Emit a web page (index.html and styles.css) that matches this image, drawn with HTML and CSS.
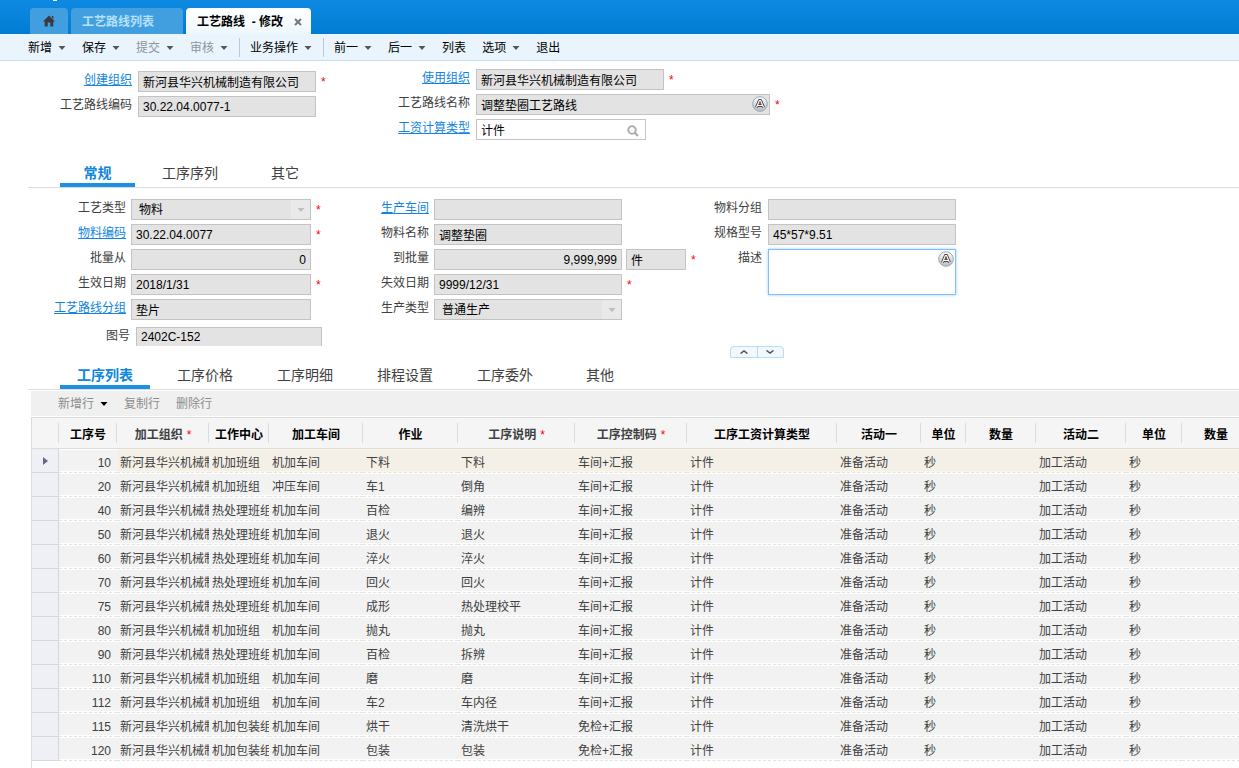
FILE: index.html
```html
<!DOCTYPE html>
<html lang="zh-CN">
<head>
<meta charset="utf-8">
<title>工艺路线 - 修改</title>
<link rel="stylesheet" href="styles.css">
</head>
<body>
<svg class="defs" aria-hidden="true">
  <defs>
    <linearGradient id="badge-fill" x1="0" y1="0" x2="0" y2="1">
      <stop offset="0" stop-color="#ffffff"/>
      <stop offset="1" stop-color="#b4bcc4"/>
    </linearGradient>
    <symbol id="caret" viewBox="0 0 8 4"><path d="M.5 0h7L4 4z" fill="currentColor"/></symbol>
    <symbol id="multilang" viewBox="0 0 16 16">
      <circle cx="8" cy="8" r="7.3" fill="url(#badge-fill)" stroke="#9aa6b2"/>
      <path d="M4.500 11.500L7.400 4.500h1.200L11.500 11.500M6 9.500h4" fill="none" stroke="#4b3f38" stroke-width="3" stroke-linejoin="round"/>
      <path d="M4.500 11.500L7.400 4.500h1.200L11.500 11.500M6 9.500h4" fill="none" stroke="#ffffff" stroke-width="1.200"/>
    </symbol>
  </defs>
</svg>

<nav class="window-tabs">
  <button class="wtab home" aria-label="主页"><svg width="12" height="12" viewBox="0 0 12 12"><path d="M6 0.500L12 6.500H10.300V11.500H7.300V7.500H4.700V11.500H1.700V6.500H0L6 .5zM8.800 1h1.600v3L8.800 2.500z" fill="#3a3a3a"/></svg></button>
  <button class="wtab list">工艺路线列表</button>
  <div class="wtab current"><span>工艺路线 &nbsp;- 修改</span><button class="close" aria-label="关闭"><svg width="8" height="8" viewBox="0 0 8 8"><path d="M1 1l6 6M7 1L1 7" stroke="#777" stroke-width="2"/></svg></button></div>
</nav>

<div class="toolbar">
  <button>新增<svg class="caret"><use href="#caret"/></svg></button>
  <button>保存<svg class="caret"><use href="#caret"/></svg></button>
  <button class="off">提交<svg class="caret"><use href="#caret"/></svg></button>
  <button class="off">审核<svg class="caret"><use href="#caret"/></svg></button>
  <span class="sep"></span>
  <button>业务操作<svg class="caret"><use href="#caret"/></svg></button>
  <span class="sep"></span>
  <button>前一<svg class="caret"><use href="#caret"/></svg></button>
  <button>后一<svg class="caret"><use href="#caret"/></svg></button>
  <button>列表</button>
  <button>选项<svg class="caret"><use href="#caret"/></svg></button>
  <button>退出</button>
</div>

<main>
  <form class="form head-form">
    <div class="column h1">
      <div class="field"><label for="f1"><a href="#">创建组织</a></label><input id="f1" class="w178" value="新河县华兴机械制造有限公司" readonly><i class="req">*</i></div>
      <div class="field"><label for="f2">工艺路线编码</label><input id="f2" class="w178" value="30.22.04.0077-1" readonly></div>
    </div>
    <div class="column h2">
      <div class="field"><label for="f3"><a href="#">使用组织</a></label><input id="f3" class="w188" value="新河县华兴机械制造有限公司" readonly><i class="req">*</i></div>
      <div class="field"><label for="f4">工艺路线名称</label><span class="wrap"><input id="f4" class="w294" value="调整垫圈工艺路线" readonly><svg class="lang"><use href="#multilang"/></svg></span><i class="req">*</i></div>
      <div class="field"><label for="f5"><a href="#">工资计算类型</a></label><span class="wrap"><input id="f5" class="w170 editable" value="计件"><svg class="search" viewBox="0 0 12 12"><circle cx="5" cy="5" r="3.800" fill="none" stroke="#aaa" stroke-width="1.800"/><path d="M7.800 7.800L11 11" stroke="#aaa" stroke-width="2.200"/></svg></span></div>
    </div>
  </form>

  <div class="tabs">
    <button class="tab active">常规</button>
    <button class="tab">工序序列</button>
    <button class="tab">其它</button>
  </div>

  <form class="form general-form">
    <div class="column g1">
      <div class="field"><label for="g1">工艺类型</label><span class="wrap"><select id="g1" class="w180"><option>物料</option></select><span class="drop"><svg class="caret"><use href="#caret"/></svg></span></span><i class="req">*</i></div>
      <div class="field"><label for="g2"><a href="#">物料编码</a></label><input id="g2" class="w180" value="30.22.04.0077" readonly><i class="req">*</i></div>
      <div class="field"><label for="g3">批量从</label><input id="g3" class="w180 num" value="0" readonly></div>
      <div class="field"><label for="g4">生效日期</label><input id="g4" class="w180" value="2018/1/31" readonly><i class="req">*</i></div>
      <div class="field"><label for="g5"><a href="#">工艺路线分组</a></label><input id="g5" class="w180" value="垫片" readonly></div>
      <div class="field drawing"><label for="g6">图号</label><input id="g6" class="w186" value="2402C-152" readonly></div>
    </div>
    <div class="column g2">
      <div class="field"><label for="g7"><a href="#">生产车间</a></label><input id="g7" class="w188" readonly></div>
      <div class="field"><label for="g8">物料名称</label><input id="g8" class="w188" value="调整垫圈" readonly></div>
      <div class="field"><label for="g9">到批量</label><input id="g9" class="w188 num" value="9,999,999" readonly><input class="unit" aria-label="单位" value="件" readonly><i class="req">*</i></div>
      <div class="field"><label for="g10">失效日期</label><input id="g10" class="w188" value="9999/12/31" readonly><i class="req">*</i></div>
      <div class="field"><label for="g11">生产类型</label><span class="wrap"><select id="g11" class="w188"><option>普通生产</option></select><span class="drop"><svg class="caret"><use href="#caret"/></svg></span></span></div>
    </div>
    <div class="column g3">
      <div class="field"><label for="g12">物料分组</label><input id="g12" class="w188" readonly></div>
      <div class="field"><label for="g13">规格型号</label><input id="g13" class="w188" value="45*57*9.51" readonly></div>
      <div class="field"><label for="g14">描述</label><span class="wrap"><textarea id="g14" class="w188"></textarea><svg class="lang"><use href="#multilang"/></svg></span></div>
    </div>
  </form>

  <div class="splitter">
    <button aria-label="收起"><svg width="8" height="4" viewBox="0 0 8 4"><path d="M.5 3.500L4 1l3.500 2.500" fill="none" stroke="#555" stroke-width="1.500"/></svg></button>
    <button aria-label="展开"><svg width="8" height="4" viewBox="0 0 8 4"><path d="M.5 .5L4 3 7.500 .5" fill="none" stroke="#555" stroke-width="1.500"/></svg></button>
  </div>

  <div class="tabs">
    <button class="tab active">工序列表</button>
    <button class="tab">工序价格</button>
    <button class="tab">工序明细</button>
    <button class="tab">排程设置</button>
    <button class="tab">工序委外</button>
    <button class="tab">其他</button>
  </div>

  <div class="row-tools">
    <button>新增行<svg class="caret"><use href="#caret"/></svg></button>
    <button>复制行</button>
    <button>删除行</button>
  </div>

  <div class="grid">
    <table>
      <colgroup><col class="c27"><col class="c58"><col class="c92"><col class="c60"><col class="c94"><col class="c95"><col class="c117"><col class="c112"><col class="c150"><col class="c84"><col class="c45"><col class="c70"><col class="c90"><col class="c56"><col class="c68"></colgroup>
      <thead>
        <tr><th></th><th><span>工序号</span></th><th class="must"><span>加工组织<i class="req">*</i></span></th><th><span>工作中心</span></th><th><span>加工车间</span></th><th><span>作业</span></th><th class="must"><span>工序说明<i class="req">*</i></span></th><th class="must"><span>工序控制码<i class="req">*</i></span></th><th><span>工序工资计算类型</span></th><th><span>活动一</span></th><th><span>单位</span></th><th><span>数量</span></th><th><span>活动二</span></th><th><span>单位</span></th><th><span>数量</span></th></tr>
      </thead>
      <tbody>
        <tr class="selected"><td><svg width="5" height="8" viewBox="0 0 5 8"><path d="M0 0l5 4-5 4z" fill="#66668e"/></svg></td><td>10</td><td>新河县华兴机械制造有限公司</td><td>机加班组</td><td>机加车间</td><td>下料</td><td>下料</td><td>车间+汇报</td><td>计件</td><td>准备活动</td><td>秒</td><td></td><td>加工活动</td><td>秒</td><td></td></tr>
        <tr><td></td><td>20</td><td>新河县华兴机械制造有限公司</td><td>机加班组</td><td>冲压车间</td><td>车1</td><td>倒角</td><td>车间+汇报</td><td>计件</td><td>准备活动</td><td>秒</td><td></td><td>加工活动</td><td>秒</td><td></td></tr>
        <tr><td></td><td>40</td><td>新河县华兴机械制造有限公司</td><td>热处理班组</td><td>机加车间</td><td>百检</td><td>编辨</td><td>车间+汇报</td><td>计件</td><td>准备活动</td><td>秒</td><td></td><td>加工活动</td><td>秒</td><td></td></tr>
        <tr><td></td><td>50</td><td>新河县华兴机械制造有限公司</td><td>热处理班组</td><td>机加车间</td><td>退火</td><td>退火</td><td>车间+汇报</td><td>计件</td><td>准备活动</td><td>秒</td><td></td><td>加工活动</td><td>秒</td><td></td></tr>
        <tr><td></td><td>60</td><td>新河县华兴机械制造有限公司</td><td>热处理班组</td><td>机加车间</td><td>淬火</td><td>淬火</td><td>车间+汇报</td><td>计件</td><td>准备活动</td><td>秒</td><td></td><td>加工活动</td><td>秒</td><td></td></tr>
        <tr><td></td><td>70</td><td>新河县华兴机械制造有限公司</td><td>热处理班组</td><td>机加车间</td><td>回火</td><td>回火</td><td>车间+汇报</td><td>计件</td><td>准备活动</td><td>秒</td><td></td><td>加工活动</td><td>秒</td><td></td></tr>
        <tr><td></td><td>75</td><td>新河县华兴机械制造有限公司</td><td>热处理班组</td><td>机加车间</td><td>成形</td><td>热处理校平</td><td>车间+汇报</td><td>计件</td><td>准备活动</td><td>秒</td><td></td><td>加工活动</td><td>秒</td><td></td></tr>
        <tr><td></td><td>80</td><td>新河县华兴机械制造有限公司</td><td>机加班组</td><td>机加车间</td><td>抛丸</td><td>抛丸</td><td>车间+汇报</td><td>计件</td><td>准备活动</td><td>秒</td><td></td><td>加工活动</td><td>秒</td><td></td></tr>
        <tr><td></td><td>90</td><td>新河县华兴机械制造有限公司</td><td>热处理班组</td><td>机加车间</td><td>百检</td><td>拆辨</td><td>车间+汇报</td><td>计件</td><td>准备活动</td><td>秒</td><td></td><td>加工活动</td><td>秒</td><td></td></tr>
        <tr><td></td><td>110</td><td>新河县华兴机械制造有限公司</td><td>机加班组</td><td>机加车间</td><td>磨</td><td>磨</td><td>车间+汇报</td><td>计件</td><td>准备活动</td><td>秒</td><td></td><td>加工活动</td><td>秒</td><td></td></tr>
        <tr><td></td><td>112</td><td>新河县华兴机械制造有限公司</td><td>机加班组</td><td>机加车间</td><td>车2</td><td>车内径</td><td>车间+汇报</td><td>计件</td><td>准备活动</td><td>秒</td><td></td><td>加工活动</td><td>秒</td><td></td></tr>
        <tr><td></td><td>115</td><td>新河县华兴机械制造有限公司</td><td>机加包装组</td><td>机加车间</td><td>烘干</td><td>清洗烘干</td><td>免检+汇报</td><td>计件</td><td>准备活动</td><td>秒</td><td></td><td>加工活动</td><td>秒</td><td></td></tr>
        <tr><td></td><td>120</td><td>新河县华兴机械制造有限公司</td><td>机加包装组</td><td>机加车间</td><td>包装</td><td>包装</td><td>免检+汇报</td><td>计件</td><td>准备活动</td><td>秒</td><td></td><td>加工活动</td><td>秒</td><td></td></tr>
      </tbody>
    </table>
  </div>
</main>
</body>
</html>
```
FILE: styles.css
```css
* { box-sizing: border-box; }
html, body { height: 100%; }
body {
  margin: 0;
  display: flex;
  flex-direction: column;
  overflow: hidden;
  background: #fff;
  color: #404040;
  font: 12px/16px "Liberation Sans", "Noto Sans CJK SC", sans-serif;
}
button, input, select, textarea { font: inherit; color: inherit; margin: 0; }
button { border: 0; background: none; padding: 0; }
i { font-style: normal; }
.defs { position: absolute; width: 0; height: 0; }
.caret { width: 8px; height: 4px; display: block; }

/* window tabs */
.window-tabs {
  flex: none;
  height: 34px;
  padding-left: 30px;
  display: flex;
  align-items: flex-end;
  gap: 3px;
  background: linear-gradient(#fff, #fff) 53px 0 / 4px 1px no-repeat, linear-gradient(#0e8ae2, #007cd3);
}
.wtab {
  height: 26px;
  display: flex;
  align-items: center;
  border-radius: 4px 4px 0 0;
  background: #419fe0;
  font-weight: bold;
}
.wtab.home { width: 38px; justify-content: center; }
.wtab.list { width: 112px; padding: 2px 0 0 11px; color: #b5e1fb; }
.wtab.current {
  width: 125px;
  padding: 2px 9px 0 11px;
  justify-content: space-between;
  white-space: nowrap;
  background: linear-gradient(#fff, #eef7fd);
  color: #000;
}
.close svg { display: block; }

/* main toolbar */
.toolbar {
  flex: none;
  height: 27px;
  padding: 1px 0 0 20px;
  display: flex;
  align-items: center;
  border-bottom: 1px solid #cbdff3;
  background: #e9f4fd;
  color: #000;
}
.toolbar button, .row-tools button {
  display: flex;
  align-items: center;
  gap: 6px;
  padding: 0 8px;
  white-space: nowrap;
}
.toolbar .off { color: #8d959c; }
.toolbar .caret { color: #555; }
.sep { width: 1px; height: 19px; margin: 0 2px 0 3px; background: #b4cadd; }

main { flex: 1; min-height: 0; display: flex; flex-direction: column; }

/* forms */
.form { display: flex; align-items: flex-start; }
.head-form { padding: 8px 0 20px; }
.general-form { padding-top: 11px; }
.column { display: flex; flex-direction: column; gap: 4px; flex: none; }
.h1 { width: 370px; padding-top: 2px; }
.g1 { width: 330px; }
.g2 { width: 366px; }
.field { display: flex; align-items: flex-start; }
.field label { flex: none; line-height: 19px; text-align: right; margin-right: 6px; white-space: nowrap; }
.h1 label { width: 132px; }
.h2 label { width: 100px; }
.g1 label { width: 126px; margin-right: 5px; }
.g2 label { width: 99px; margin-right: 5px; }
.g3 label { width: 66px; }
.field a { color: #1185e0; text-decoration: underline; text-underline-offset: 1px; }
.field input, .field select, .field textarea {
  display: block;
  flex: none;
  height: 21px;
  padding: 0 4px;
  border: 1px solid #c3c3c3;
  border-radius: 0;
  outline: 0;
  background: #e3e3e3;
  color: #000;
  opacity: 1;
}
.field select { appearance: none; padding: 1px 0 0 7px; }
.field .editable { background: #fff; }
.field .num { text-align: right; }
.field .unit { width: 60px; margin-left: 4px; }
.field .w170 { width: 170px; }
.field .w178 { width: 178px; }
.field .w180 { width: 180px; }
.field .w186 { width: 186px; }
.field .w188 { width: 188px; }
.field .w294 { width: 294px; }
.field textarea {
  height: 46px;
  resize: none;
  border-color: #7fbff5;
  background: #fff;
  box-shadow: 0 0 3px #9fd0f8;
}
.g1 .drawing { margin-top: 3px; }
.g1 .drawing label { width: 130px; margin-right: 6px; }
.field.drawing input { height: 19px; border-bottom: 0; }
.req { color: #f00; }
.field .req { margin-left: 5px; line-height: 22px; height: 21px; }
.wrap { position: relative; }
.lang { position: absolute; right: 2px; top: 2px; width: 16px; height: 16px; }
.search { position: absolute; right: 7px; top: 6px; width: 12px; height: 12px; }
.drop {
  position: absolute;
  top: 1px;
  right: 1px;
  bottom: 1px;
  width: 19px;
  display: flex;
  align-items: center;
  justify-content: center;
  background: #e9e9e9;
  color: #bdbdbd;
  pointer-events: none;
}

/* tab strips */
.tabs {
  flex: none;
  display: flex;
  gap: 10px;
  margin-left: 28px;
  padding-left: 32px;
  border-bottom: 1px solid #dcdcdc;
}
.tab {
  min-width: 80px;
  padding: 3px 17px 0;
  border-bottom: 4px solid transparent;
  font-size: 14px;
  line-height: 20px;
  white-space: nowrap;
}
.tab.active { min-width: 75px; border-bottom-color: #1b91e6; color: #0f87dc; font-weight: bold; }

.splitter {
  flex: none;
  align-self: flex-start;
  display: flex;
  width: 54px;
  height: 12px;
  margin: 0 0 4px 730px;
  border: 1px solid #b9dcf5;
  border-radius: 4px 4px 0 0;
  background: #f1f9fe;
}
.splitter button { flex: 1; display: flex; align-items: center; justify-content: center; }
.splitter button + button { border-left: 1px solid #c9d3da; }

/* process list */
.row-tools {
  flex: none;
  height: 25px;
  margin: 1px 0 1px 31px;
  padding-left: 19px;
  display: flex;
  align-items: center;
  background: #f0f0f0;
  color: #8c8c8c;
}
.row-tools .caret { color: #000; }
.grid {
  flex: 1;
  min-height: 0;
  margin-left: 31px;
  overflow: hidden;
  border-top: 1px solid #dcdcdc;
  border-left: 1px solid #dcdcdc;
}
table { width: 1218px; table-layout: fixed; border-collapse: separate; border-spacing: 0; }
.c27 { width: 27px; }
.c45 { width: 45px; }
.c56 { width: 56px; }
.c58 { width: 58px; }
.c60 { width: 60px; }
.c68 { width: 68px; }
.c70 { width: 70px; }
.c84 { width: 84px; }
.c90 { width: 90px; }
.c92 { width: 92px; }
.c94 { width: 94px; }
.c95 { width: 95px; }
.c112 { width: 112px; }
.c117 { width: 117px; }
.c150 { width: 150px; }
th {
  height: 31px;
  padding: 4px 0 0;
  border-bottom: 1px solid #dcdcdc;
  background: linear-gradient(#dcdcdc, #dcdcdc) 100% 5px / 1px 20px no-repeat, #f5f5f5;
  color: #000;
  white-space: nowrap;
}
.must { color: #404040; }
th .req { margin-left: 4px; font-weight: normal; }
td {
  height: 24px;
  padding: 4px 0 0 3px;
  overflow: hidden;
  white-space: nowrap;
  border-bottom: 1px dashed #e2e2e2;
  background: #f2f2f2;
  background-clip: padding-box;
  box-shadow: inset 0 1px #fff, inset 0 -1px #fff;
}
td:first-child {
  padding: 0;
  text-align: center;
  border-right: 1px solid #d6d8dc;
  border-bottom: 1px solid #d6d8dc;
  background: #eff0f5;
  box-shadow: none;
}
td:first-child svg { display: block; margin: 0 auto; }
td:nth-child(2) { padding: 4px 6px 0 0; text-align: right; }
.selected td:nth-child(n+3) { background-color: #f4f0e8; box-shadow: inset 0 1px #fdf6e2, inset 0 -1px #fdf6e2; }
```
